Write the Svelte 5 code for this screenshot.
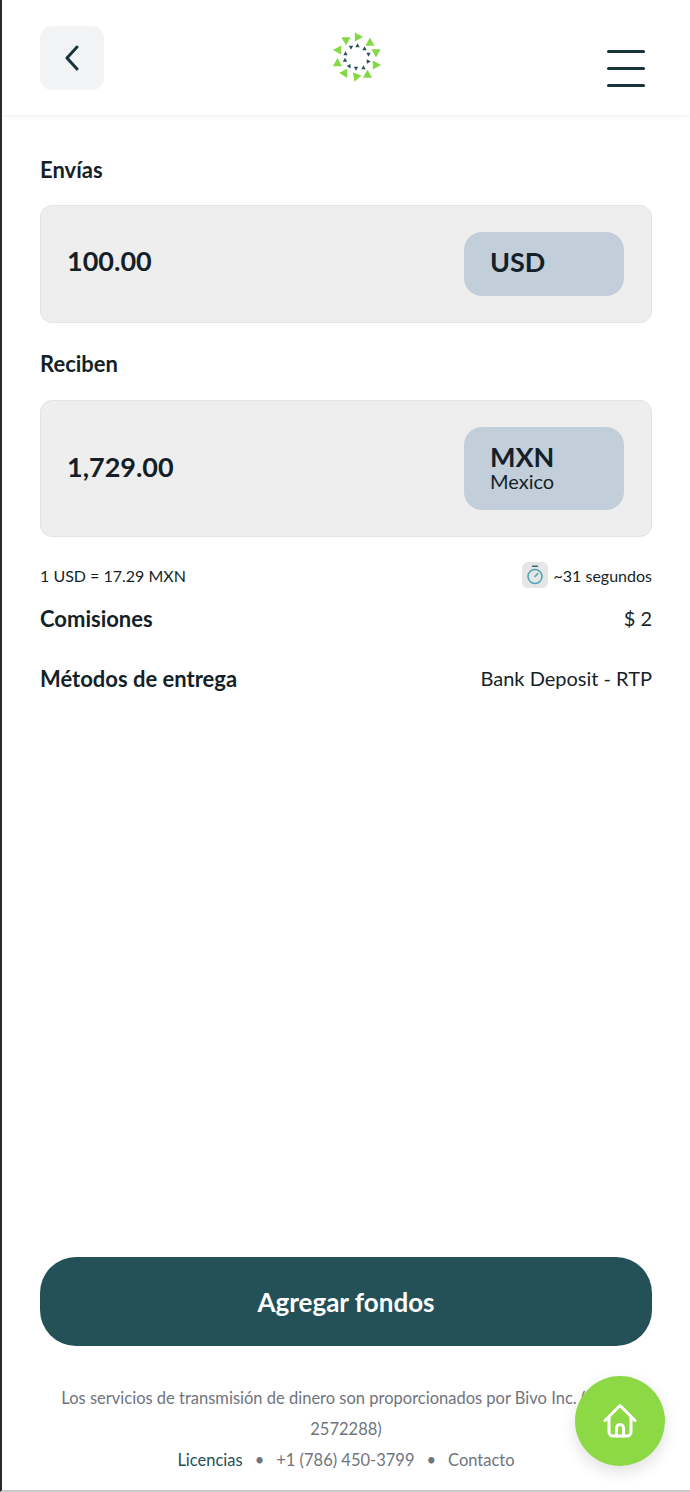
<script>
  // logo triangles: x, y, rotation, in px of the 70x65 crop around the logo
  const outer = [
    [37.5, 12, 90], [49, 17, 0], [55, 28, 180], [55.5, 40, 90], [46.5, 49, 0],
    [35, 52.5, 200], [24, 49, 150], [16.5, 37.5, 0], [16.5, 25, 270], [25, 16, 180]
  ];
  const inner = [
    [36.5, 20.5, 0], [43.5, 23.5, 0], [47.5, 29.5, 180], [47.5, 36.5, 90], [42.5, 42.5, 0],
    [35, 43.5, 180], [28.5, 41.5, 150], [24, 35, 0], [24.5, 28.5, 0], [30, 22.5, 180]
  ];
  const tri = (s) => `0,${-s} ${s},${s * 0.8} ${-s},${s * 0.8}`;
</script>

<div class="page">
  <header class="topbar">
    <button class="back" aria-label="Volver">
      <svg width="16" height="26" viewBox="0 0 16 26" fill="none">
        <path d="M13 2 L3 13 L13 24" stroke="#17343a" stroke-width="3" stroke-linecap="round" stroke-linejoin="round" />
      </svg>
    </button>
    <svg class="logo" width="70" height="65" viewBox="0 0 70 65">
      {#each outer as [x, y, r]}
        <polygon points={tri(4.6)} fill="#84d845" transform="translate({x} {y}) rotate({r})" />
      {/each}
      {#each inner as [x, y, r]}
        <polygon points={tri(2.2)} fill="#2b5160" transform="translate({x} {y}) rotate({r})" />
      {/each}
    </svg>
    <button class="burger" aria-label="Menú">
      <span></span><span></span><span></span>
    </button>
  </header>

  <main class="content">
    <h2 class="label">Envías</h2>
    <div class="amount first">
      <span class="value">100.00</span>
      <div class="currency"><strong>USD</strong></div>
    </div>

    <h2 class="label second">Reciben</h2>
    <div class="amount tall">
      <span class="value">1,729.00</span>
      <div class="currency"><strong>MXN</strong><small>Mexico</small></div>
    </div>

    <div class="rate">
      <span>1 USD = 17.29 MXN</span>
      <span class="timer">
        <span class="clock">
          <svg width="18" height="20" viewBox="0 0 18 20" fill="none" stroke="#4aa3b3" stroke-width="1.5" stroke-linecap="round">
            <path d="M6.5 1.2h5" stroke="#3a6a72" />
            <circle cx="9" cy="11.5" r="7" />
            <path d="M9 11.5l2.8-3" />
          </svg>
        </span>
        ~31 segundos
      </span>
    </div>

    <div class="row fee">
      <strong>Comisiones</strong>
      <span>$ 2</span>
    </div>
    <div class="row delivery">
      <strong>Métodos de entrega</strong>
      <span>Bank Deposit - RTP</span>
    </div>

    <button class="cta">Agregar fondos</button>

    <footer class="legal">
      <p>Los servicios de transmisión de dinero son proporcionados por Bivo Inc. (NMLS 2572288)</p>
      <p class="links">
        <span class="licencias">Licencias</span>
        <i>•</i>
        <span>+1 (786) 450-3799</span>
        <i>•</i>
        <span>Contacto</span>
      </p>
    </footer>
  </main>

  <button class="home" aria-label="Inicio">
    <svg width="34" height="36" viewBox="0 0 34 36" fill="none" stroke="#fff" stroke-width="3" stroke-linecap="round" stroke-linejoin="round">
      <path d="M2 17.5 L17 2.5 L32 17.5 M6 14.5 V29 a4 4 0 0 0 4 4 H24 a4 4 0 0 0 4 -4 V14.5" />
      <path d="M13.5 33 V25 a3.5 3.5 0 0 1 7 0 V33" />
    </svg>
  </button>
</div>

<style>
  :global(body) {
    margin: 0;
    background: #fff;
  }

  .page {
    position: relative;
    box-sizing: border-box;
    width: 690px;
    height: 1492px;
    overflow: hidden;
    background: #fff;
    border-left: 2px solid #2b2b2d;
    border-bottom: 2px solid #c9c9c9;
    font-family: Lato, "Liberation Sans", sans-serif;
    color: #151f28;
  }

  .topbar {
    height: 115px;
    box-sizing: border-box;
    padding: 26px 45px 0 38px;
    display: flex;
    justify-content: space-between;
    align-items: flex-start;
    box-shadow: 0 1px 5px rgba(0, 0, 0, 0.07);
  }

  button {
    border: 0;
    padding: 0;
    font-family: inherit;
    cursor: pointer;
  }

  .back {
    width: 64px;
    height: 64px;
    border-radius: 12px;
    background: #f2f3f5;
    display: flex;
    align-items: center;
    justify-content: center;
  }

  .logo {
    margin-top: -1px;
    margin-left: 1px;
  }

  .burger {
    width: 38px;
    margin-top: 24px;
    background: none;
    display: flex;
    flex-direction: column;
    gap: 14px;
  }

  .burger span {
    height: 3px;
    border-radius: 2px;
    background: #17343a;
  }

  .content {
    padding: 0 38px;
    display: flex;
    flex-direction: column;
  }

  .label {
    margin: 41px 0 0;
    font-size: 22px;
    line-height: 28px;
    font-weight: 700;
  }

  .label.second {
    margin-top: 27px;
  }

  .amount {
    box-sizing: border-box;
    height: 118px;
    margin-top: 21px;
    padding: 26px 27px 0 26px;
    display: flex;
    justify-content: space-between;
    align-items: flex-start;
    background: #eeeeee;
    border: 1px solid #e3e3e3;
    border-radius: 12px;
  }

  .amount.first .currency {
    height: 64px;
  }

  .amount.tall {
    height: 137px;
    margin-top: 22px;
  }

  .value {
    font-size: 27px;
    line-height: 58px;
    font-weight: 700;
  }

  .amount.tall .value {
    line-height: 80px;
  }

  .currency {
    box-sizing: border-box;
    width: 160px;
    height: 83px;
    padding: 15px 26px 0;
    background: #c2cfda;
    border-radius: 18px;
    display: flex;
    flex-direction: column;
  }

  .currency strong {
    font-size: 27px;
    line-height: 30px;
  }

  .currency small {
    font-size: 20px;
    line-height: 18px;
    font-weight: 400;
  }

  .rate {
    height: 26px;
    margin-top: 25px;
    display: flex;
    justify-content: space-between;
    align-items: center;
    font-size: 16px;
  }

  .timer {
    display: flex;
    align-items: center;
    gap: 6px;
  }

  .clock {
    width: 26px;
    height: 26px;
    border-radius: 6px;
    background: #e6e6e6;
    display: flex;
    align-items: center;
    justify-content: center;
  }

  .row {
    display: flex;
    justify-content: space-between;
    align-items: center;
    height: 30px;
    font-size: 20px;
  }

  .row strong {
    font-size: 22px;
  }

  .fee {
    margin-top: 15px;
  }

  .delivery {
    margin-top: 30px;
  }

  .cta {
    height: 89px;
    margin-top: 564px;
    border-radius: 36px;
    background: #235157;
    color: #fff;
    font-size: 26px;
    font-weight: 700;
  }

  .legal {
    margin-top: 37px;
    text-align: center;
    font-size: 16.5px;
    line-height: 31px;
    color: #70747e;
  }

  .legal p {
    margin: 0;
  }

  .links {
    margin-top: -1px;
    display: flex;
    justify-content: center;
    gap: 12px;
  }

  .links i {
    font-style: normal;
  }

  .licencias {
    color: #235157;
  }

  .home {
    position: absolute;
    left: 573px;
    top: 1376px;
    width: 90px;
    height: 90px;
    border-radius: 50%;
    background: #8cd845;
    box-shadow: 0 6px 16px rgba(0, 0, 0, 0.12);
    display: flex;
    align-items: center;
    justify-content: center;
  }
</style>
